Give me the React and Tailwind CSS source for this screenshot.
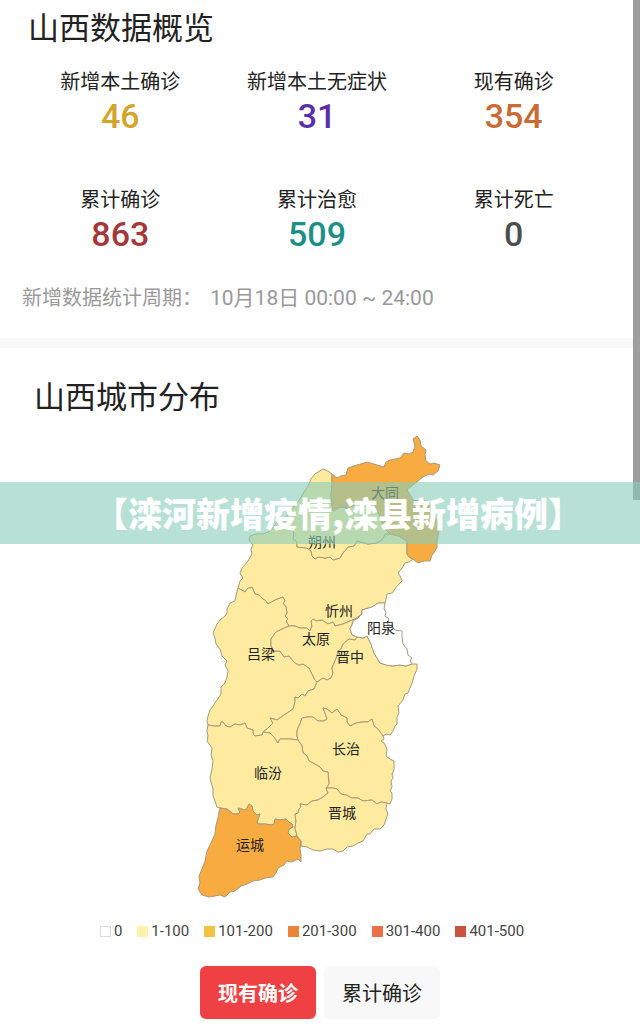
import React, { useState } from 'react'

const stats = [
  { label: '新增本土确诊', value: 46, color: 'text-[#d3a52c]' },
  { label: '新增本土无症状', value: 31, color: 'text-[#5a2fa8]' },
  { label: '现有确诊', value: 354, color: 'text-[#c76c34]' },
  { label: '累计确诊', value: 863, color: 'text-[#a3383a]' },
  { label: '累计治愈', value: 509, color: 'text-[#1c8f87]' },
  { label: '累计死亡', value: 0, color: 'text-[#4d4d4f]' },
]

const legend = [
  { label: '0', color: 'bg-white border border-[#dcdcdc]' },
  { label: '1-100', color: 'bg-[#fdf2a9]' },
  { label: '101-200', color: 'bg-[#f3c144]' },
  { label: '201-300', color: 'bg-[#ea8438]' },
  { label: '301-400', color: 'bg-[#ec6f48]' },
  { label: '401-500', color: 'bg-[#c8533f]' },
]

const LOW = '#feeb9f'
const MID = '#f8ab40'

const cities = [
  {
    name: '忻州', x: 339, y: 610, fill: LOW,
    points: '283,517 277,521 270,530 263,533 256,533 250,535 249,539 253,544 251,548 252,553 248,560 242,567 240,572 243,577 240,580 238,587 245,591 248,587 250,587 252,586 255,593 259,594 263,598 266,600 268,603 275,599 283,596 285,600 283,602 286,606 287,612 285,615 288,618 286,620 289,625 295,625 300,627 307,627 310,630 312,625 311,620 313,618 316,620 322,619 328,623 333,621 335,625 343,623 350,620 355,618 362,613 362,609 372,606 378,602 385,602 386,598 387,593 392,592 397,585 402,580 400,575 398,572 402,567 405,562 409,561 413,558 409,556 407,553 407,540 399,535 390,533 385,533 382,539 377,542 368,543 357,540 354,545 348,546 343,552 340,557 333,559 330,556 325,557 318,556 315,558 312,555 311,550 307,547 297,546 297,541 293,538 294,532 291,526',
  },
  {
    name: '朔州', x: 322, y: 541, fill: LOW,
    points: '332,473 328,470 323,468 315,473 311,478 308,485 304,491 300,498 294,505 287,515 283,517 291,526 294,532 293,538 297,541 297,546 307,547 311,550 312,555 315,558 318,556 325,557 330,556 333,559 340,557 343,552 348,546 354,545 357,540 368,543 377,542 382,539 385,533 390,533 386,529 383,525 380,516 377,508 373,501 366,499 360,500 353,505 347,507 340,506 333,510 331,495 332,484',
  },
  {
    name: '大同', x: 385, y: 492, fill: MID,
    points: '332,473 337,477 341,475 346,474 348,467 357,464 367,461 377,464 384,466 386,461 390,459 400,457 404,452 409,453 413,451 415,445 413,438 417,435 420,439 421,445 426,449 425,454 426,460 430,463 434,462 440,464 438,470 433,474 429,473 423,476 418,480 413,484 407,489 411,495 413,499 418,500 424,499 430,503 432,512 438,521 439,530 437,541 437,546 435,550 432,554 430,560 424,560 418,562 413,558 409,556 407,553 407,540 399,535 390,533 386,529 383,525 380,516 377,508 373,501 366,499 360,500 353,505 347,507 340,506 333,510 331,495 332,484',
  },
  {
    name: '吕梁', x: 261, y: 653, fill: LOW,
    points: '238,587 237,590 236,595 235,600 230,602 227,608 227,612 225,615 221,618 217,623 213,632 215,637 216,643 220,648 222,655 227,660 225,664 228,670 227,676 225,682 221,686 221,693 217,699 213,705 210,709 208,715 207,720 208,724 214,725 220,725 221,721 223,721 226,725 230,726 235,723 240,724 245,722 247,727 253,729 253,733 255,735 262,734 263,731 268,727 273,722 270,717 277,719 284,714 290,710 293,708 294,705 295,700 295,696 298,697 302,693 305,695 308,690 314,688 317,681 315,679 313,675 309,667 303,663 299,664 295,662 289,655 284,656 280,650 274,650 271,645 271,638 276,631 282,628 289,625 286,620 288,618 285,615 287,612 286,606 283,602 285,600 283,596 275,599 268,603 266,600 263,598 259,594 255,593 252,586 250,587 248,587 245,591',
  },
  {
    name: '太原', x: 316, y: 638, fill: LOW,
    points: '289,625 295,625 300,627 307,627 310,630 312,625 311,620 313,618 316,620 322,619 328,623 333,621 335,625 343,623 350,620 355,618 362,613 358,617 353,620 352,624 350,628 352,634 357,636 355,639 349,638 343,643 341,648 338,650 337,655 335,660 332,667 333,672 331,677 327,679 323,677 317,681 315,679 313,675 309,667 303,663 299,664 295,662 289,655 284,656 280,650 274,650 271,645 271,638 276,631 282,628',
  },
  {
    name: '晋中', x: 350, y: 656, fill: LOW,
    points: '357,636 363,637 367,635 371,643 374,652 380,662 386,664 392,665 400,664 406,665 412,663 417,663 417,668 414,675 412,682 408,692 405,693 403,699 398,705 399,712 397,716 397,723 395,725 393,730 390,734 386,733 383,735 380,731 378,728 374,725 372,718 368,721 362,721 356,722 350,725 347,721 347,717 341,714 337,708 332,712 327,708 323,707 325,712 327,718 324,720 318,720 313,716 308,716 302,717 300,723 298,727 297,730 297,735 298,739 290,738 280,738 278,742 274,736 270,732 263,731 268,727 273,722 270,717 277,719 284,714 290,710 293,708 294,705 295,700 295,696 298,697 302,693 305,695 308,690 314,688 317,681 323,677 327,679 331,677 333,672 332,667 335,660 337,655 338,650 341,648 343,643 349,638 355,639',
  },
  {
    name: '阳泉', x: 381, y: 627, fill: '#ffffff',
    points: '362,609 372,606 378,602 385,602 384,608 386,611 385,615 389,618 387,623 392,625 395,629 402,630 402,637 403,643 407,648 408,654 412,657 410,660 412,663 406,665 400,664 392,665 386,664 380,662 374,652 371,643 367,635 363,637 357,636 352,634 350,628 352,624 353,620 358,617 362,613',
  },
  {
    name: '长治', x: 346, y: 748, fill: LOW,
    points: '298,739 297,735 297,730 298,727 300,723 302,717 308,716 313,716 318,720 324,720 327,718 325,712 323,707 327,708 332,712 337,708 341,714 347,717 347,721 350,725 356,722 362,721 368,721 372,718 374,725 378,728 380,731 383,735 384,738 381,740 385,743 387,749 386,755 390,758 394,760 394,769 392,773 393,777 391,780 392,786 390,790 392,792 392,798 390,803 387,802 381,801 377,803 372,799 363,800 358,797 352,797 346,794 341,793 337,788 333,787 326,787 329,783 328,771 323,770 320,766 313,762 309,760 307,755 303,752 302,745',
  },
  {
    name: '临汾', x: 268, y: 772, fill: LOW,
    points: '208,724 214,725 220,725 221,721 223,721 226,725 230,726 235,723 240,724 245,722 247,727 253,729 253,733 255,735 262,734 263,731 270,732 274,736 278,742 280,738 290,738 298,739 302,745 303,752 307,755 309,760 313,762 320,766 323,770 328,771 329,783 326,787 328,792 323,796 318,799 312,800 307,804 300,803 301,806 299,808 298,812 295,813 296,820 295,827 297,835 292,836 288,832 289,828 293,826 292,823 290,822 286,818 280,819 275,818 274,823 272,824 265,823 257,823 258,818 260,813 257,814 253,810 252,805 249,803 247,807 245,809 238,807 240,811 238,813 233,813 227,808 220,807 217,806 215,800 213,795 213,788 210,777 212,768 213,760 211,754 212,747 207,740 208,735 207,730',
  },
  {
    name: '晋城', x: 342, y: 812, fill: LOW,
    points: '326,787 333,787 337,788 341,793 346,794 352,797 358,797 363,800 372,799 377,803 381,801 387,802 386,808 388,813 386,818 384,824 380,828 374,828 370,833 367,833 363,840 358,842 353,845 347,846 343,850 338,851 333,848 327,848 320,850 313,849 307,846 301,845 301,840 297,835 295,827 296,820 295,813 298,812 299,808 301,806 300,803 307,804 312,800 318,799 323,796 328,792',
  },
  {
    name: '运城', x: 250, y: 844, fill: MID,
    points: '220,807 227,808 233,813 238,813 240,811 238,807 245,809 247,807 249,803 252,805 253,810 257,814 260,813 258,818 257,823 265,823 272,824 274,823 275,818 280,819 286,818 290,822 292,823 293,826 289,828 288,832 292,836 297,835 299,839 301,840 300,848 301,854 301,861 298,858 292,861 287,860 284,864 278,867 276,872 273,876 265,877 260,879 253,880 247,883 241,885 235,890 230,891 225,896 220,894 215,895 209,896 202,894 198,888 200,882 199,875 202,868 205,860 207,850 211,842 215,833 216,824 218,817 219,811',
  },
]

function Stat({ label, value, color }) {
  return (
    <div className="text-center">
      <div className="text-xl leading-7">{label}</div>
      <div className={`font-[Roboto,sans-serif] text-[34px] leading-[42px] font-medium ${color}`}>{value}</div>
    </div>
  )
}

function CityMap() {
  return (
    <svg viewBox="190 425 260 480" className="block w-[260px] mx-auto mt-[11px]" role="img" aria-label="山西城市分布">
      <g stroke="#a59a7c" strokeWidth="1" strokeLinejoin="round">
        {cities.map((c) => (
          <polygon key={c.name} points={c.points} fill={c.fill} />
        ))}
      </g>
      <g fill="#222222" fontSize="14" textAnchor="middle">
        {cities.map((c) => (
          <text key={c.name} x={c.x} y={c.y + 5}>{c.name}</text>
        ))}
      </g>
    </svg>
  )
}

function App() {
  const [mode, setMode] = useState('current')

  const tab = (active) =>
    `w-[116px] h-[53px] rounded-md text-xl ${active ? 'bg-[#ef4043] text-white font-bold' : 'bg-[#f8f8f8] text-[#222222]'}`

  return (
    <div className="relative bg-white text-[#222222] font-['Noto_Sans_CJK_SC',sans-serif] overflow-hidden">
      <section className="pt-1.5 pb-[26px]">
        <h1 className="pl-7 text-[31px] leading-10">山西数据概览</h1>
        <div className="mt-[21px] pl-[22px] pr-7 grid grid-cols-3 gap-y-12">
          {stats.map((s) => (
            <Stat key={s.label} {...s} />
          ))}
        </div>
        <p className="mt-7 pl-[22px] text-xl leading-7 text-[#999999]">
          新增数据统计周期：
          <span className="ml-2 font-[Roboto,'Noto_Sans_CJK_SC',sans-serif] text-[21px]">10月18日 00:00 ~ 24:00</span>
        </p>
      </section>

      <div className="h-2.5 bg-[#f8f8f8]" />

      <section className="pt-[27px] pb-2">
        <h2 className="pl-[34px] text-[31px] leading-10">山西城市分布</h2>
        <CityMap />
        <ul className="mt-[13px] pr-4 flex justify-center gap-[15px] font-[Roboto,sans-serif] text-[15px] leading-6 text-[#444444]">
          {legend.map((l) => (
            <li key={l.label} className="flex items-center gap-[3px]">
              <span className={`w-[11px] h-[11px] ${l.color}`} />
              {l.label}
            </li>
          ))}
        </ul>
        <div className="mt-[23px] flex justify-center gap-2">
          <button type="button" className={tab(mode === 'current')} onClick={() => setMode('current')}>
            现有确诊
          </button>
          <button type="button" className={tab(mode === 'total')} onClick={() => setMode('total')}>
            累计确诊
          </button>
        </div>
      </section>

      <div className="absolute top-0 right-0 w-[7px] h-[500px] bg-[#9c9ea0]" />

      <div className="absolute top-[482px] inset-x-0 h-[62px] pl-9 flex items-center justify-center bg-[#89cdbb]/60">
        <strong className="text-[34px] leading-none font-black text-white whitespace-nowrap">
          【滦河新增疫情,滦县新增病例】
        </strong>
      </div>
    </div>
  )
}

export default App
